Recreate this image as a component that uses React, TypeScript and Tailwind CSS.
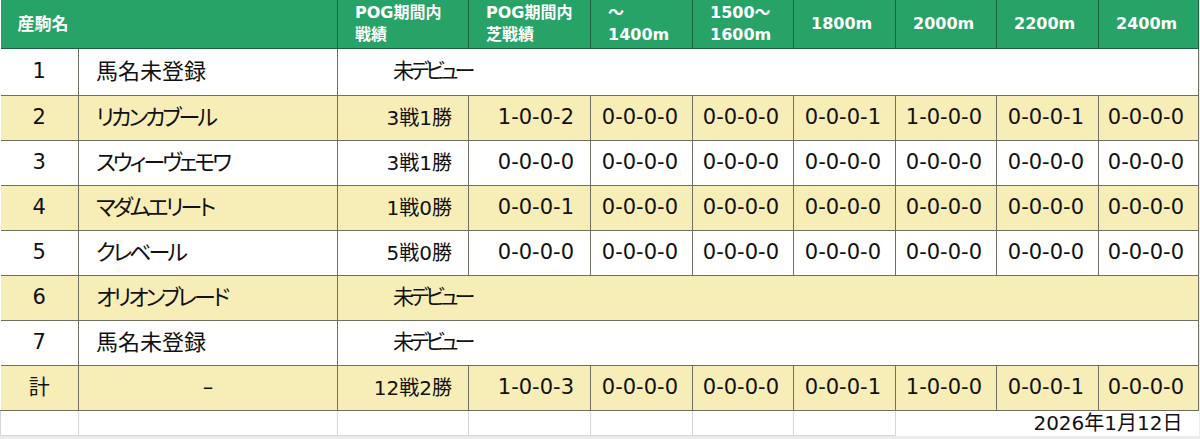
import React from 'react';

type Horse = {
  no: string;
  name: string;
  kana?: boolean;
  total: string;
  turf?: string;
  dist?: string[];
};

const horses: Horse[] = [
  { no: '1', name: '馬名未登録', total: '' },
  {
    no: '2',
    name: 'リカンカブール',
    kana: true,
    total: '3戦1勝',
    turf: '1-0-0-2',
    dist: ['0-0-0-0', '0-0-0-0', '0-0-0-1', '1-0-0-0', '0-0-0-1', '0-0-0-0'],
  },
  {
    no: '3',
    name: 'スウィーヴェモワ',
    kana: true,
    total: '3戦1勝',
    turf: '0-0-0-0',
    dist: ['0-0-0-0', '0-0-0-0', '0-0-0-0', '0-0-0-0', '0-0-0-0', '0-0-0-0'],
  },
  {
    no: '4',
    name: 'マダムエリート',
    kana: true,
    total: '1戦0勝',
    turf: '0-0-0-1',
    dist: ['0-0-0-0', '0-0-0-0', '0-0-0-0', '0-0-0-0', '0-0-0-0', '0-0-0-0'],
  },
  {
    no: '5',
    name: 'クレベール',
    kana: true,
    total: '5戦0勝',
    turf: '0-0-0-0',
    dist: ['0-0-0-0', '0-0-0-0', '0-0-0-0', '0-0-0-0', '0-0-0-0', '0-0-0-0'],
  },
  { no: '6', name: 'オリオンブレード', kana: true, total: '' },
  { no: '7', name: '馬名未登録', total: '' },
];

const totalRow = {
  turf: '1-0-0-3',
  dist: ['0-0-0-0', '0-0-0-0', '0-0-0-1', '1-0-0-0', '0-0-0-1', '0-0-0-0'],
};

const widths = [78, 259, 131, 122, 102, 101, 102, 101, 102, 100];

const th =
  'whitespace-nowrap border border-t-0 border-[#1d5e3e] px-[17px] text-left align-middle font-bold text-white';
const td = 'border border-[#6f6f66] align-middle';

export default function App() {
  return (
    <div className="h-[439px] w-[1200px] overflow-hidden bg-[#ececec] text-[#111] [font-family:'DejaVu_Sans','Noto_Sans_CJK_JP',sans-serif]">
      <table className="table-fixed border-collapse bg-white" style={{ width: 1198 }}>
        <colgroup>
          {widths.map((w, i) => (
            <col key={i} style={{ width: w }} />
          ))}
        </colgroup>
        <thead>
          <tr className="h-[48px] bg-[#28a368] text-[16px] leading-[22px]">
            <th colSpan={2} className={`${th} border-l-0 px-[14px] text-[17px]`}>
              産駒名
            </th>
            <th className={th}>
              POG期間内
              <br />
              戦績
            </th>
            <th className={th}>
              POG期間内
              <br />
              芝戦績
            </th>
            <th className={th}>
              ～
              <br />
              1400m
            </th>
            <th className={th}>
              1500～
              <br />
              1600m
            </th>
            <th className={th}>1800m</th>
            <th className={th}>2000m</th>
            <th className={th}>2200m</th>
            <th className={th}>2400m</th>
          </tr>
        </thead>
        <tbody className="text-[21px] [font-feature-settings:'palt']">
          {horses.map((h, i) => (
            <tr
              key={h.no}
              className={`${i === 0 ? 'h-[47px]' : 'h-[45px]'} ${i % 2 === 1 ? 'bg-[#f7edb7]' : 'bg-white'}`}
            >
              <td className={`${td} border-l-0 text-center`}>{h.no}</td>
              <td className={`${td} pl-[17px]`}>
                <span className={h.kana ? 'text-[22px] tracking-[-3px]' : 'text-[22px]'}>{h.name}</span>
              </td>
              {h.dist ? (
                <>
                  <td className={`${td} pr-[16px] text-right text-[20px]`}>{h.total}</td>
                  <td className={`${td} pr-[16px] text-right`}>{h.turf}</td>
                  {h.dist.map((d, j) => (
                    <td key={j} className={`${td} pr-[14px] text-right`}>
                      {d}
                    </td>
                  ))}
                </>
              ) : (
                <td colSpan={8} className={`${td} pl-[55px]`}>
                  <span className="tracking-[-4px]">未デビュー</span>
                </td>
              )}
            </tr>
          ))}
          <tr className="h-[45px] bg-[#f7edb7]">
            <td className={`${td} border-l-0 text-center`}>計</td>
            <td className={`${td} text-center`}>–</td>
            <td className={`${td} pr-[16px] text-right text-[20px]`}>12戦2勝</td>
            <td className={`${td} pr-[16px] text-right`}>{totalRow.turf}</td>
            {totalRow.dist.map((d, j) => (
              <td key={j} className={`${td} pr-[14px] text-right`}>
                {d}
              </td>
            ))}
          </tr>
          <tr className="h-[25px] bg-white text-[20px] leading-[24px]">
            {widths.slice(0, 7).map((_, i) => (
              <td key={i} className="border border-t-0 border-[#d6d6d6]" />
            ))}
            <td colSpan={3} className="border-0 pr-[16px] text-right">
              2026年1月12日
            </td>
          </tr>
        </tbody>
      </table>
    </div>
  );
}
